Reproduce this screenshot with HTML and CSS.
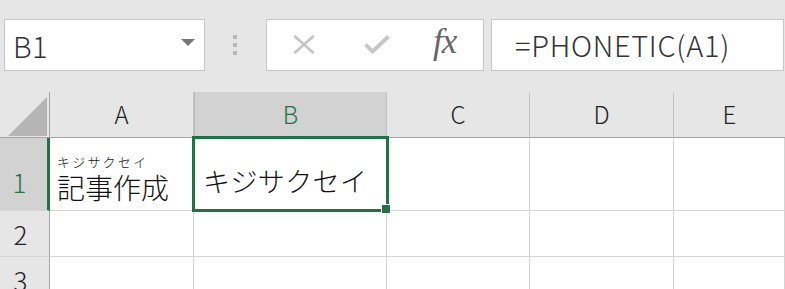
FILE: index.html
```html
<!DOCTYPE html>
<html lang="ja">
<head>
<meta charset="utf-8">
<link rel="stylesheet" href="styles.css">
</head>
<body>
<div class="app">
  <div class="toolbar">
    <div class="namebox">
      <span class="name">B1</span>
      <span class="dropdown"></span>
    </div>
    <div class="grip"><i></i><i></i><i></i></div>
    <div class="fbuttons">
      <svg class="ico-x" width="22" height="19" viewBox="0 0 22 19"><path d="M2 1.5 L20 17.5 M20 1.5 L2 17.5" stroke="#c3c3c3" stroke-width="2.6" fill="none" stroke-linecap="round"/></svg>
      <svg class="ico-check" width="26" height="19" viewBox="0 0 26 19"><path d="M1.5 9.5 L8.5 16.5 L24.5 1.5" stroke="#c6c6c6" stroke-width="3.8" fill="none" stroke-linejoin="round"/></svg>
      <span class="fx">fx</span>
    </div>
    <div class="formula">=PHONETIC(A1)</div>
  </div>
  <div class="sheet">
    <div class="cell hdr corner"><span class="tri"></span></div>
    <div class="cell hdr col">A</div>
    <div class="cell hdr col sel-col">B</div>
    <div class="cell hdr col">C</div>
    <div class="cell hdr col">D</div>
    <div class="cell hdr col last">E</div>

    <div class="cell hdr row sel-row">1</div>
    <div class="cell data a1"><span class="ruby">キジサクセイ</span><span class="kanji">記事作成</span></div>
    <div class="cell data b1">キジサクセイ</div>
    <div class="cell data"></div>
    <div class="cell data"></div>
    <div class="cell data"></div>

    <div class="cell hdr row">2</div>
    <div class="cell data"></div>
    <div class="cell data"></div>
    <div class="cell data"></div>
    <div class="cell data"></div>
    <div class="cell data"></div>

    <div class="cell hdr row">3</div>
    <div class="cell data"></div>
    <div class="cell data"></div>
    <div class="cell data"></div>
    <div class="cell data"></div>
    <div class="cell data"></div>

    <div class="selection"></div>
    <div class="handle"></div>
  </div>
</div>
</body>
</html>
```

FILE: styles.css
```css
html, body {
  margin: 0;
  padding: 0;
  background: #e6e6e6;
  overflow: hidden;
}
.app {
  width: 785px;
  height: 289px;
  font-family: "Noto Sans CJK JP", "Noto Sans", sans-serif;
  font-weight: 300;
  color: #222;
}
.toolbar {
  height: 92px;
  display: flex;
  align-items: flex-start;
  padding: 19px 0 0 4px;
  box-sizing: border-box;
}
.namebox {
  width: 201px;
  height: 52px;
  box-sizing: border-box;
  background: #fff;
  border: 1px solid #c6c6c6;
  display: flex;
  align-items: center;
  justify-content: space-between;
  padding: 0 9px 0 8px;
}
.name {
  font-size: 29px;
  color: #333;
  letter-spacing: 0.5px;
}
.dropdown {
  width: 0;
  height: 0;
  border-left: 7px solid transparent;
  border-right: 7px solid transparent;
  border-top: 7px solid #777;
  margin-top: -5px;
}
.grip {
  width: 61px;
  height: 52px;
  display: flex;
  flex-direction: column;
  align-items: center;
  justify-content: center;
  gap: 4px;
  padding-right: 1px;
  box-sizing: border-box;
}
.grip i {
  display: block;
  width: 4px;
  height: 4px;
  background: #b9b9b9;
}
.fbuttons {
  width: 218px;
  height: 52px;
  box-sizing: border-box;
  background: #fff;
  border: 1px solid #c6c6c6;
  display: flex;
  align-items: center;
  padding-left: 26px;
}
.ico-x { margin-top: -1px; }
.ico-check { margin-left: 49px; margin-top: -2px; }
.fx {
  margin-left: 43px;
  font-family: "Liberation Serif", "DejaVu Serif", serif;
  font-style: italic;
  font-weight: 400;
  font-size: 35px;
  color: #666;
  margin-top: -6px;
  letter-spacing: -1px;
}
.formula {
  margin-left: 7px;
  width: 293px;
  height: 52px;
  box-sizing: border-box;
  background: #fff;
  border: 1px solid #c6c6c6;
  padding-left: 23px;
  font-size: 29px;
  line-height: 48px;
  color: #333;
  letter-spacing: 0.7px;
  white-space: nowrap;
  overflow: hidden;
}
.sheet {
  position: relative;
  display: grid;
  grid-template-columns: 50px 144px 193px 143px 144px 1fr;
  grid-template-rows: 46px 73px 46px 46px;
  background: #fff;
}
.cell {
  box-sizing: border-box;
  border-right: 1px solid #d4d4d4;
  border-bottom: 1px solid #d4d4d4;
}
.hdr {
  background: #e6e6e6;
  display: flex;
  align-items: center;
  justify-content: center;
  font-size: 24px;
  color: #222;
}
.col {
  border-right: 1px solid #c4c4c4;
  border-bottom: 1px solid #a6a6a6;
  padding-bottom: 2px;
}
.col.last { border-right: none; }
.corner {
  border-right: 1px solid #a6a6a6;
  border-bottom: 1px solid #a6a6a6;
  position: relative;
}
.tri {
  position: absolute;
  left: 8px;
  top: 5px;
  width: 0;
  height: 0;
  border-left: 39px solid transparent;
  border-bottom: 39px solid #b4b4b4;
}
.row {
  border-right: 1px solid #a6a6a6;
  border-bottom: 1px solid #d4d4d4;
  padding-right: 8px;
  font-size: 26px;
}
.sel-col {
  background: #d2d2d2;
  color: #217346;
  border-bottom: 2px solid #217346;
  border-left: 1px solid #b8b8b8;
}
.sel-row {
  background: #d2d2d2;
  color: #217346;
  border-right: 3px solid #217346;
  padding-top: 14px;
}
.data { background: #fff; }
.a1 {
  display: flex;
  flex-direction: column;
  justify-content: flex-end;
  padding: 0 0 7px 7px;
  color: #111;
}
.ruby {
  font-size: 13px;
  letter-spacing: 2.2px;
  line-height: 15px;
  margin-bottom: 2px;
}
.kanji {
  font-size: 28px;
  line-height: 32px;
}
.b1 {
  display: flex;
  align-items: flex-end;
  padding: 0 0 10px 9px;
  font-size: 27px;
  letter-spacing: 0.4px;
  color: #111;
}
.selection {
  position: absolute;
  left: 192px;
  top: 44px;
  width: 197px;
  height: 76px;
  box-sizing: border-box;
  border: 3px solid #217346;
}
.handle {
  position: absolute;
  left: 382px;
  top: 113px;
  width: 8px;
  height: 8px;
  background: #217346;
  outline: 1px solid #fff;
}
```
